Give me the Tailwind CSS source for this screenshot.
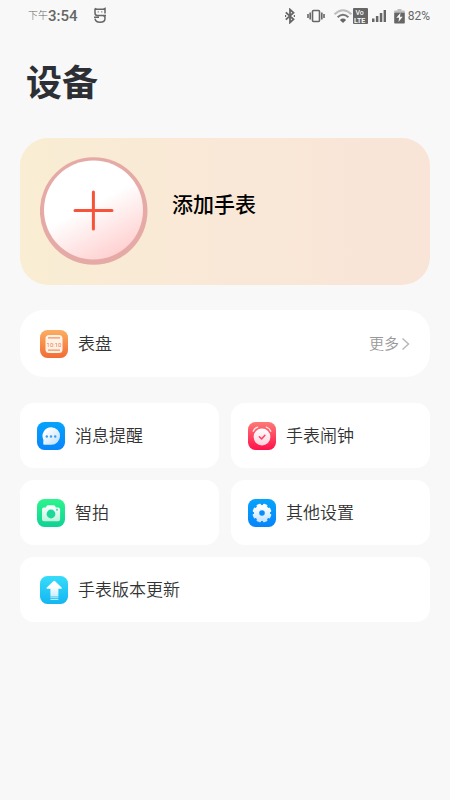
<!DOCTYPE html>
<html lang="zh-CN">
<head>
<meta charset="utf-8">
<meta name="viewport" content="width=device-width, initial-scale=1">
<title>设备</title>
<script src="https://cdn.jsdelivr.net/npm/@tailwindcss/browser@4"></script>
</head>
<body class="min-h-screen bg-[#f8f8f8] font-['Roboto','Noto_Sans_CJK_SC',sans-serif] text-[#333333]">
<header class="flex h-8 items-center justify-between pl-7 pr-5 text-[#666666]">
  <div class="flex items-center">
    <span class="text-[10px] font-light leading-4">下午</span>
    <span class="text-[15px] font-medium leading-4">3:54</span>
    <svg class="ml-4 h-[18px] w-[14px]" viewBox="0 0 14 18" fill="none" stroke="currentColor" stroke-width="1.5" aria-hidden="true">
      <path d="M1 1.500v4.500q0 2.500 2.400 2.500h5.200q2.400 0 2.400 2.300v.7q0 3.800-5 3.800-4.500 0-5-3.600M11 6.500v-5L9.400 2.200H2.600L1 1.500M0 10.300h5M12 8.500H8"/>
      <path d="M4.200 4.300v1.200M7.800 4.300v1.200" stroke-width="1"/>
    </svg>
  </div>
  <div class="flex items-center">
    <svg class="h-4 w-[10px]" viewBox="0 0 10 16" fill="none" stroke="currentColor" stroke-width="1.800" aria-hidden="true"><path d="m.8 4.300 7.700 7L5 14.500V1.500l3.500 3.200-7.700 7"/><path d="M0 8h1.200M8.800 8H10"/></svg>
    <svg class="ml-3 h-4 w-[18px]" viewBox="0 0 18 16" fill="none" stroke="currentColor" stroke-width="1.600" aria-hidden="true"><rect x="5.500" y="2.500" width="7" height="11" rx="1"/><path d="M3.200 4.500v7M14.800 4.500v7M1 6v4M17 6v4"/></svg>
    <svg class="ml-2 h-4 w-5" viewBox="0 0 20 16" fill="none" stroke-width="1.900" aria-hidden="true"><path d="M1.500 6.300Q10-1.800 18.500 6.300" stroke="#bdbdbd"/><path d="M4.600 9.300q5.400-5 10.800 0" stroke="#777"/><path d="M6.900 11.900Q10 9.300 13.100 11.900L10 15Z" fill="#666"/></svg>
    <svg class="h-4 w-[15px]" viewBox="0 0 15 16" role="img" aria-label="VoLTE"><rect width="15" height="16" rx="1" fill="#666"/><text x="2.500" y="7" font-size="7" font-weight="500" fill="#f8f8f8">Vo</text><text x="1" y="14.500" font-size="7" font-weight="700" fill="#f8f8f8">LTE</text></svg>
    <svg class="ml-1 h-4 w-[14px]" viewBox="0 0 14 16" fill="currentColor" aria-hidden="true"><path d="M0 10.500h2.500V14H0zM3.900 8h2.500v6H3.900zM7.800 5h2.500v9H7.800zM11.600 2H14v12h-2.400z"/></svg>
    <svg class="ml-2 h-4 w-[11px]" viewBox="0 0 11 16" aria-hidden="true"><path d="M3.500 1h4v1.500H10a.8.8 0 0 1 .8.8V5H.2V3.300a.8.800 0 0 1 .8-.8h2.500z" fill="#bdbdbd"/><path d="M.2 4.700h10.600v10a.8.800 0 0 1-.8.800H1a.8.800 0 0 1-.8-.8z" fill="#666"/><path d="M6.500 4.800 2.300 9.700h2.800l-.6 4.400 4.200-5.300H6z" fill="#f8f8f8"/></svg>
    <span class="ml-[3px] text-[12px] leading-4">82%</span>
  </div>
</header>

<main class="px-5">
  <h1 class="mt-[26px] px-[6px] text-[36px] font-bold leading-[52px] text-[#2c2f33]">设备</h1>

  <button type="button" class="mt-7 flex w-full items-center gap-6 rounded-[28px] bg-linear-to-r from-[#f9edd3] via-[#f9e8d7] to-[#f9e4d8] px-5 pt-[19px] pb-5 text-left">
    <svg class="size-[108px] shrink-0" viewBox="0 0 108 108" aria-hidden="true">
      <defs>
        <linearGradient id="dial" x1=".3" y1=".1" x2=".75" y2=".95"><stop offset=".4" stop-color="#fff"/><stop offset="1" stop-color="#ffd0d0"/></linearGradient>
        <filter id="soft" x="-5%" y="-5%" width="110%" height="110%"><feGaussianBlur stdDeviation=".6"/></filter>
      </defs>
      <circle cx="53.700" cy="54" r="53.800" fill="#e5aaa5"/>
      <circle cx="53.500" cy="53" r="49.500" fill="url(#dial)" filter="url(#soft)"/>
      <path d="M53.400 35v37M35 53.400h37" stroke="#f8533a" stroke-width="3" stroke-linecap="round"/>
    </svg>
    <span class="pb-3 text-[21px] font-medium leading-8 text-black">添加手表</span>
  </button>

  <button type="button" class="mt-[25px] flex h-[67px] w-full items-center gap-[10px] rounded-[24px] bg-white px-5 text-left">
    <svg class="size-7 shrink-0" viewBox="0 0 28 28" aria-hidden="true">
      <defs><linearGradient id="orange" x2="0" y2="1"><stop stop-color="#fbae62"/><stop offset="1" stop-color="#f26c35"/></linearGradient></defs>
      <rect width="28" height="28" rx="7.500" fill="url(#orange)"/>
      <rect x="5.500" y="5" width="17" height="18" rx="3.500" fill="#fff2e9"/>
      <path d="M8 7.800h12M8 20.200h12" stroke="#f49358" stroke-width="1.200"/>
      <text x="14" y="16.500" text-anchor="middle" font-size="6" fill="#f17b46">10:10</text>
    </svg>
    <span class="grow text-[17px] font-[350] leading-6">表盘</span>
    <span class="flex items-center gap-[2px] text-[15px] font-[350] leading-6 text-[#999999]">更多
      <svg class="h-[14px] w-[9px]" viewBox="0 0 9 14" fill="none" stroke="#b9b9b9" stroke-width="1.500" aria-hidden="true"><path d="m1.500 1.500 6 5.500-6 5.500"/></svg>
    </span>
  </button>

  <div class="mt-[26px] grid grid-cols-2 gap-3">
    <button type="button" class="flex h-[65px] items-center gap-[10px] rounded-[14px] bg-white px-[17px] text-left">
      <svg class="size-7 shrink-0" viewBox="0 0 28 28" aria-hidden="true">
        <defs>
          <linearGradient id="blue" x2="0" y2="1"><stop stop-color="#05a4fb"/><stop offset="1" stop-color="#0784fb"/></linearGradient>
          <linearGradient id="bubble" x2="1" y2="1"><stop offset=".2" stop-color="#fff"/><stop offset="1" stop-color="#b9ddfa"/></linearGradient>
        </defs>
        <rect width="28" height="28" rx="7.500" fill="url(#blue)"/>
        <path d="M14.300 5.300a8.700 8.700 0 1 1 0 17.400H7.200q-1 0-1-1l.2-3.800a8.700 8.700 0 0 1 7.900-12.600z" fill="url(#bubble)"/>
        <g fill="#399cf2"><circle cx="9.800" cy="14.500" r="1.200"/><circle cx="14" cy="14.500" r="1.200"/><circle cx="18.200" cy="14.500" r="1.200"/></g>
      </svg>
      <span class="text-[17px] font-[350] leading-6">消息提醒</span>
    </button>

    <button type="button" class="flex h-[65px] items-center gap-[10px] rounded-[14px] bg-white px-[17px] text-left">
      <svg class="size-7 shrink-0" viewBox="0 0 28 28" aria-hidden="true">
        <defs>
          <linearGradient id="red" x2="0" y2="1"><stop stop-color="#fd7a75"/><stop offset="1" stop-color="#ff114c"/></linearGradient>
          <linearGradient id="clock" x2="0" y2="1"><stop stop-color="#fff"/><stop offset="1" stop-color="#ffd2dc"/></linearGradient>
        </defs>
        <rect width="28" height="28" rx="7.500" fill="url(#red)"/>
        <path d="M5.200 9.200q1.300-3 4.400-4M22.800 9.200q-1.300-3-4.400-4" fill="none" stroke="#ffe6e8" stroke-width="1.400" stroke-linecap="round"/>
        <circle cx="14" cy="15" r="8.400" fill="url(#clock)"/>
        <path d="m11.300 14.800 2.300 2.100 3.300-3.700" fill="none" stroke="#fb4268" stroke-width="1.500" stroke-linecap="round" stroke-linejoin="round"/>
      </svg>
      <span class="text-[17px] font-[350] leading-6">手表闹钟</span>
    </button>

    <button type="button" class="flex h-[65px] items-center gap-[10px] rounded-[14px] bg-white px-[17px] text-left">
      <svg class="size-7 shrink-0" viewBox="0 0 28 28" aria-hidden="true">
        <defs>
          <linearGradient id="green" x2="0" y2="1"><stop stop-color="#2bf58c"/><stop offset="1" stop-color="#0fd195"/></linearGradient>
          <linearGradient id="camera" x2="0" y2="1"><stop stop-color="#fff"/><stop offset="1" stop-color="#bff5df"/></linearGradient>
        </defs>
        <rect width="28" height="28" rx="7.500" fill="url(#green)"/>
        <path d="M10.800 6.200h6.100q.6 0 1 .6l1 1.600h2.200q2 0 2 2v9.800q0 2-2 2H7q-2 0-2-2v-9.800q0-2 2-2h1.800l1-1.600q.4-.6 1-.6z" fill="url(#camera)"/>
        <circle cx="14" cy="15" r="4.400" fill="#1ed89a"/>
        <circle cx="20" cy="10.800" r="1" fill="#35dda0"/>
      </svg>
      <span class="text-[17px] font-[350] leading-6">智拍</span>
    </button>

    <button type="button" class="flex h-[65px] items-center gap-[10px] rounded-[14px] bg-white px-[17px] text-left">
      <svg class="size-7 shrink-0" viewBox="0 0 28 28" aria-hidden="true">
        <defs>
          <linearGradient id="gear" x2="0" y2="1"><stop offset=".2" stop-color="#fff"/><stop offset="1" stop-color="#bde0ff"/></linearGradient>
          <clipPath id="teeth">
            <circle cx="14" cy="14" r="8"/>
            <rect x="11.700" y="4.600" width="4.600" height="18.800" rx="1" transform="rotate(22.500 14 14)"/>
            <rect x="11.700" y="4.600" width="4.600" height="18.800" rx="1" transform="rotate(67.500 14 14)"/>
            <rect x="11.700" y="4.600" width="4.600" height="18.800" rx="1" transform="rotate(112.500 14 14)"/>
            <rect x="11.700" y="4.600" width="4.600" height="18.800" rx="1" transform="rotate(157.500 14 14)"/>
          </clipPath>
        </defs>
        <rect width="28" height="28" rx="7.500" fill="url(#blue)"/>
        <rect x="4" y="4" width="20" height="20" fill="url(#gear)" clip-path="url(#teeth)"/>
        <circle cx="14" cy="14" r="2.800" fill="#078efb"/>
      </svg>
      <span class="text-[17px] font-[350] leading-6">其他设置</span>
    </button>

    <button type="button" class="col-span-2 flex h-[65px] items-center gap-[10px] rounded-[14px] bg-white px-5 text-left">
      <svg class="size-7 shrink-0" viewBox="0 0 28 28" aria-hidden="true">
        <defs>
          <linearGradient id="cyan" x2="0" y2="1"><stop stop-color="#37dcfa"/><stop offset="1" stop-color="#14b6f0"/></linearGradient>
          <linearGradient id="arrow" x2="0" y2="1"><stop offset=".4" stop-color="#fff"/><stop offset="1" stop-color="#c8effc"/></linearGradient>
        </defs>
        <rect width="28" height="28" rx="7.500" fill="url(#cyan)"/>
        <path d="M13.200 5.300q1-1 2 0l6.400 6.300q1 1.200-.4 1.200h-2.800v7.400h-8v-7.400H7.200q-1.400 0-.4-1.200z" fill="url(#arrow)"/>
        <path d="M10.400 21.200h8M10.400 23.300h8" stroke="#b5eafb" stroke-width="1.200"/>
      </svg>
      <span class="text-[17px] font-[350] leading-6">手表版本更新</span>
    </button>
  </div>
</main>
</body>
</html>
